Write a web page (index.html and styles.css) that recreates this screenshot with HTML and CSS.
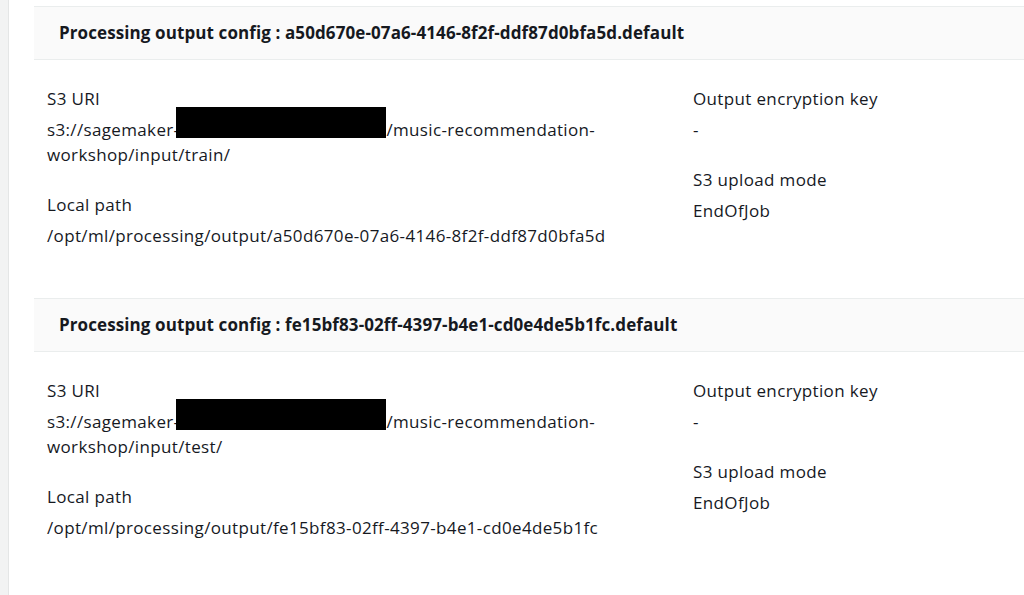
FILE: index.html
```html
<!DOCTYPE html>
<html>
<head>
<meta charset="utf-8">
<link rel="stylesheet" href="styles.css">
</head>
<body>
<div class="page">
  <div class="panel">
    <section class="config">
      <div class="config-head">Processing output config : a50d670e-07a6-4146-8f2f-ddf87d0bfa5d.default</div>
      <div class="config-body">
        <div class="col col-left">
          <div class="field">
            <div class="label">S3 URI</div>
            <div class="value">s3://sagemaker-<span class="redact"></span>/music-recommendation-workshop/input/train/</div>
          </div>
          <div class="field">
            <div class="label">Local path</div>
            <div class="value">/opt/ml/processing/output/a50d670e-07a6-4146-8f2f-ddf87d0bfa5d</div>
          </div>
        </div>
        <div class="col col-right">
          <div class="field">
            <div class="label">Output encryption key</div>
            <div class="value">-</div>
          </div>
          <div class="field">
            <div class="label">S3 upload mode</div>
            <div class="value">EndOfJob</div>
          </div>
        </div>
      </div>
    </section>
    <section class="config">
      <div class="config-head">Processing output config : fe15bf83-02ff-4397-b4e1-cd0e4de5b1fc.default</div>
      <div class="config-body">
        <div class="col col-left">
          <div class="field">
            <div class="label">S3 URI</div>
            <div class="value">s3://sagemaker-<span class="redact"></span>/music-recommendation-workshop/input/test/</div>
          </div>
          <div class="field">
            <div class="label">Local path</div>
            <div class="value">/opt/ml/processing/output/fe15bf83-02ff-4397-b4e1-cd0e4de5b1fc</div>
          </div>
        </div>
        <div class="col col-right">
          <div class="field">
            <div class="label">Output encryption key</div>
            <div class="value">-</div>
          </div>
          <div class="field">
            <div class="label">S3 upload mode</div>
            <div class="value">EndOfJob</div>
          </div>
        </div>
      </div>
    </section>
  </div>
</div>
</body>
</html>
```

FILE: styles.css
```css
html, body {
  margin: 0;
  padding: 0;
  height: 100%;
}
body {
  background: #f2f3f3;
  font-family: "Open Sans", "Noto Sans", sans-serif;
  font-size: 17px;
  letter-spacing: 0.35px;
  color: #16191f;
  overflow: hidden;
}
.page {
  padding-left: 8px;
  height: 100%;
}
.panel {
  background: #ffffff;
  border-left: 1px solid #e4e6e6;
  height: 100%;
  padding: 6px 0 0 25px;
  box-sizing: border-box;
}
.config {
  display: flex;
  flex-direction: column;
}
.config-head {
  background: #fafafa;
  border-top: 1px solid #eaeded;
  border-bottom: 1px solid #eaeded;
  height: 52px;
  line-height: 52px;
  padding-left: 25px;
  font-weight: 700;
  font-size: 17px;
  letter-spacing: 0.1px;
  white-space: nowrap;
}
.config-body {
  display: grid;
  grid-template-columns: 646px 1fr;
  padding: 26px 0 50px 13px;
}
.col {
  display: flex;
  flex-direction: column;
  gap: 25px;
}
.field {
  display: flex;
  flex-direction: column;
  gap: 6px;
}
.label, .value {
  line-height: 25px;
}
.value {
  padding-right: 40px;
}
.redact {
  display: inline-block;
  position: relative;
  width: 210px;
  height: 25px;
  margin-left: -3px;
  vertical-align: top;
}
.redact::before {
  content: "";
  position: absolute;
  left: 0;
  top: -10px;
  width: 210px;
  height: 31px;
  background: #000;
}
```
